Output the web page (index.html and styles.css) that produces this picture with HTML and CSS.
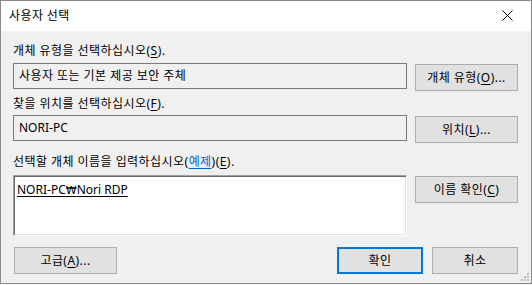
FILE: index.html
```html
<!DOCTYPE html>
<html lang="ko">
<head>
<meta charset="utf-8">
<title>사용자 선택</title>
<link rel="stylesheet" href="styles.css">
</head>
<body>
<div class="window">
  <div class="titlebar">
    <span class="title">사용자 선택</span>
    <svg class="close" width="11" height="11" viewBox="0 0 11 11"><path d="M0.5 0.5 L10.5 10.5 M10.5 0.5 L0.5 10.5" stroke="#000" stroke-width="1" fill="none"/></svg>
  </div>
  <div class="content">
    <div class="label label-first">개체 유형을 선택하십시오(<u>S</u>).</div>
    <div class="row">
      <div class="field">사용자 또는 기본 제공 보안 주체</div>
      <button class="btn">개체 유형(<u>O</u>)...</button>
    </div>
    <div class="label label-second">찾을 위치를 선택하십시오(<u>F</u>).</div>
    <div class="row">
      <div class="field latin">NORI-PC</div>
      <button class="btn">위치(<u>L</u>)...</button>
    </div>
    <div class="label label-third">선택할 개체 이름을 입력하십시오(<span class="link">예제</span>)(<u>E</u>).</div>
    <div class="row">
      <div class="names latin"><span class="resolved">NORI-PC<span class="won">₩</span>Nori RDP</span></div>
      <button class="btn">이름 확인(<u>C</u>)</button>
    </div>
    <div class="footer">
      <button class="btn btn-adv">고급(<u>A</u>)...</button>
      <div class="spacer"></div>
      <button class="btn btn-small btn-default">확인</button>
      <button class="btn btn-small">취소</button>
    </div>
  </div>
  <svg class="grip" width="9" height="9" viewBox="0 0 9 9">
    <rect x="6" y="0" width="2" height="2" fill="#bcbcbc"/>
    <rect x="3" y="3" width="2" height="2" fill="#bcbcbc"/>
    <rect x="6" y="3" width="2" height="2" fill="#bcbcbc"/>
    <rect x="0" y="6" width="2" height="2" fill="#bcbcbc"/>
    <rect x="3" y="6" width="2" height="2" fill="#bcbcbc"/>
    <rect x="6" y="6" width="2" height="2" fill="#bcbcbc"/>
  </svg>
</div>
</body>
</html>
```

FILE: styles.css
```css
html, body {
  margin: 0;
  padding: 0;
  background: #f4f4f4;
}

body {
  font-family: "Noto Sans", "Noto Sans CJK KR", sans-serif;
  font-size: 12px;
  line-height: 16px;
  letter-spacing: 0.45px;
  color: #000;
}

.latin {
  letter-spacing: 0;
}

.won {
  font-family: "DejaVu Sans", "Noto Sans", sans-serif;
  font-size: 11px;
}

.window {
  position: relative;
  width: 532px;
  height: 284px;
  box-sizing: border-box;
  border: 1px solid #8a8a8a;
  background: #f0f0f0;
  display: flex;
  flex-direction: column;
}

.titlebar {
  height: 30px;
  background: #fff;
  display: flex;
  align-items: center;
  justify-content: space-between;
  padding: 0 18px 0 8px;
}

.title {
  font-size: 12px;
  letter-spacing: 0.4px;
}

.close {
  display: block;
  margin-top: -1px;
}

.content {
  flex: 1;
  display: flex;
  flex-direction: column;
  padding: 0 13px 0 12px;
}

.label-first { margin-top: 12px; margin-bottom: 4px; }
.label-second { margin-top: 5px; margin-bottom: 3px; }
.label-third { margin-top: 11px; margin-bottom: 5px; }

.row {
  display: flex;
  align-items: flex-start;
  gap: 8px;
}

.field {
  width: 394px;
  height: 26px;
  box-sizing: border-box;
  border: 1px solid #7a7a7a;
  padding: 4px 5px 0;
  background: #f0f0f0;
  white-space: nowrap;
}

.names {
  width: 394px;
  height: 61px;
  box-sizing: border-box;
  background: #fff;
  border: 1px solid;
  border-color: #a0a0a0 #ffffff #ffffff #a0a0a0;
  box-shadow: inset 1px 1px 0 #696969, inset -1px -1px 0 #e3e3e3;
  padding: 6px 3px 0;
}

.resolved {
  text-decoration: underline;
  text-underline-offset: 2px;
}

.link {
  color: #0066cc;
  text-decoration: underline;
  text-underline-offset: 2px;
}

u {
  text-underline-offset: 2px;
}

.btn {
  font: inherit;
  letter-spacing: inherit;
  color: #000;
  width: 103px;
  height: 27px;
  margin-top: 1px;
  box-sizing: border-box;
  background: #e1e1e1;
  border: 1px solid #adadad;
  padding: 0;
  display: flex;
  align-items: center;
  justify-content: center;
  white-space: nowrap;
}

.footer {
  display: flex;
  align-items: flex-start;
  margin-top: 10px;
}

.btn-adv {
  margin-left: 1px;
}

.spacer {
  flex: 1;
}

.btn-small {
  width: 86px;
}

.btn-default {
  border: 2px solid #0078d7;
  margin-right: 9px;
}

.grip {
  position: absolute;
  right: 1px;
  bottom: 1px;
}
```
